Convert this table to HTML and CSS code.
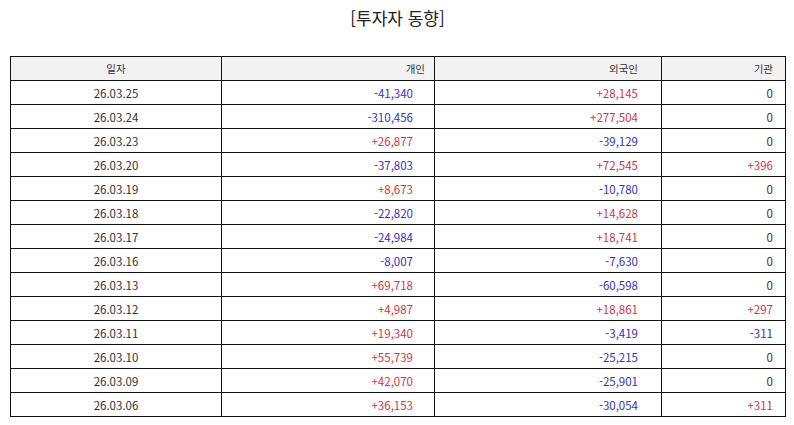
FILE: index.html
```html
<!DOCTYPE html>
<html lang="ko">
<head>
<meta charset="utf-8">
<link rel="stylesheet" href="styles.css">
</head>
<body>
<div class="page">
  <h1 class="title">[투자자 동향]</h1>
  <table class="grid">
    <thead>
      <tr><th class="c-date">일자</th><th class="c-ind">개인</th><th class="c-for">외국인</th><th class="c-ins">기관</th></tr>
    </thead>
    <tbody>
      <tr><td class="c-date">26.03.25</td><td class="c-ind neg">-41,340</td><td class="c-for pos">+28,145</td><td class="c-ins">0</td></tr>
      <tr><td class="c-date">26.03.24</td><td class="c-ind neg">-310,456</td><td class="c-for pos">+277,504</td><td class="c-ins">0</td></tr>
      <tr><td class="c-date">26.03.23</td><td class="c-ind pos">+26,877</td><td class="c-for neg">-39,129</td><td class="c-ins">0</td></tr>
      <tr><td class="c-date">26.03.20</td><td class="c-ind neg">-37,803</td><td class="c-for pos">+72,545</td><td class="c-ins pos">+396</td></tr>
      <tr><td class="c-date">26.03.19</td><td class="c-ind pos">+8,673</td><td class="c-for neg">-10,780</td><td class="c-ins">0</td></tr>
      <tr><td class="c-date">26.03.18</td><td class="c-ind neg">-22,820</td><td class="c-for pos">+14,628</td><td class="c-ins">0</td></tr>
      <tr><td class="c-date">26.03.17</td><td class="c-ind neg">-24,984</td><td class="c-for pos">+18,741</td><td class="c-ins">0</td></tr>
      <tr><td class="c-date">26.03.16</td><td class="c-ind neg">-8,007</td><td class="c-for neg">-7,630</td><td class="c-ins">0</td></tr>
      <tr><td class="c-date">26.03.13</td><td class="c-ind pos">+69,718</td><td class="c-for neg">-60,598</td><td class="c-ins">0</td></tr>
      <tr><td class="c-date">26.03.12</td><td class="c-ind pos">+4,987</td><td class="c-for pos">+18,861</td><td class="c-ins pos">+297</td></tr>
      <tr><td class="c-date">26.03.11</td><td class="c-ind pos">+19,340</td><td class="c-for neg">-3,419</td><td class="c-ins neg">-311</td></tr>
      <tr><td class="c-date">26.03.10</td><td class="c-ind pos">+55,739</td><td class="c-for neg">-25,215</td><td class="c-ins">0</td></tr>
      <tr><td class="c-date">26.03.09</td><td class="c-ind pos">+42,070</td><td class="c-for neg">-25,901</td><td class="c-ins">0</td></tr>
      <tr><td class="c-date">26.03.06</td><td class="c-ind pos">+36,153</td><td class="c-for neg">-30,054</td><td class="c-ins pos">+311</td></tr>
    </tbody>
  </table>
</div>
</body>
</html>
```

FILE: styles.css
```css
html, body {
  margin: 0;
  padding: 0;
  background: #ffffff;
}
body {
  font-family: "Noto Sans CJK KR", "Noto Sans", sans-serif;
  color: #333333;
}
.page {
  padding: 0 9px 0 10px;
}
.title {
  margin: 0;
  height: 56px;
  padding-top: 6px;
  box-sizing: border-box;
  text-align: center;
  font-size: 17px;
  font-weight: normal;
  line-height: 24px;
  color: #222222;
}
.grid {
  width: 776px;
  border-collapse: collapse;
  table-layout: fixed;
  font-size: 11.5px;
}
.grid th, .grid td {
  border: 1px solid #111111;
  height: 24px;
  padding: 0;
  line-height: 14px;
  color: #333333;
  box-sizing: border-box;
}
.grid th {
  background: #f2f2f2;
  font-weight: normal;
  font-size: 10.5px;
}
.c-date { width: 211px; text-align: center; }
.c-ind { width: 213px; text-align: right; }
.c-for { width: 227px; text-align: right; }
.c-ins { text-align: right; }
th.c-ind { padding-right: 9px; }
td.c-ind { padding-right: 21px; }
th.c-for, td.c-for { padding-right: 23px; }
th.c-ins, td.c-ins { padding-right: 12px; }
.grid td.pos { color: #e0303c; }
.grid td.neg { color: #3030cc; }
```
